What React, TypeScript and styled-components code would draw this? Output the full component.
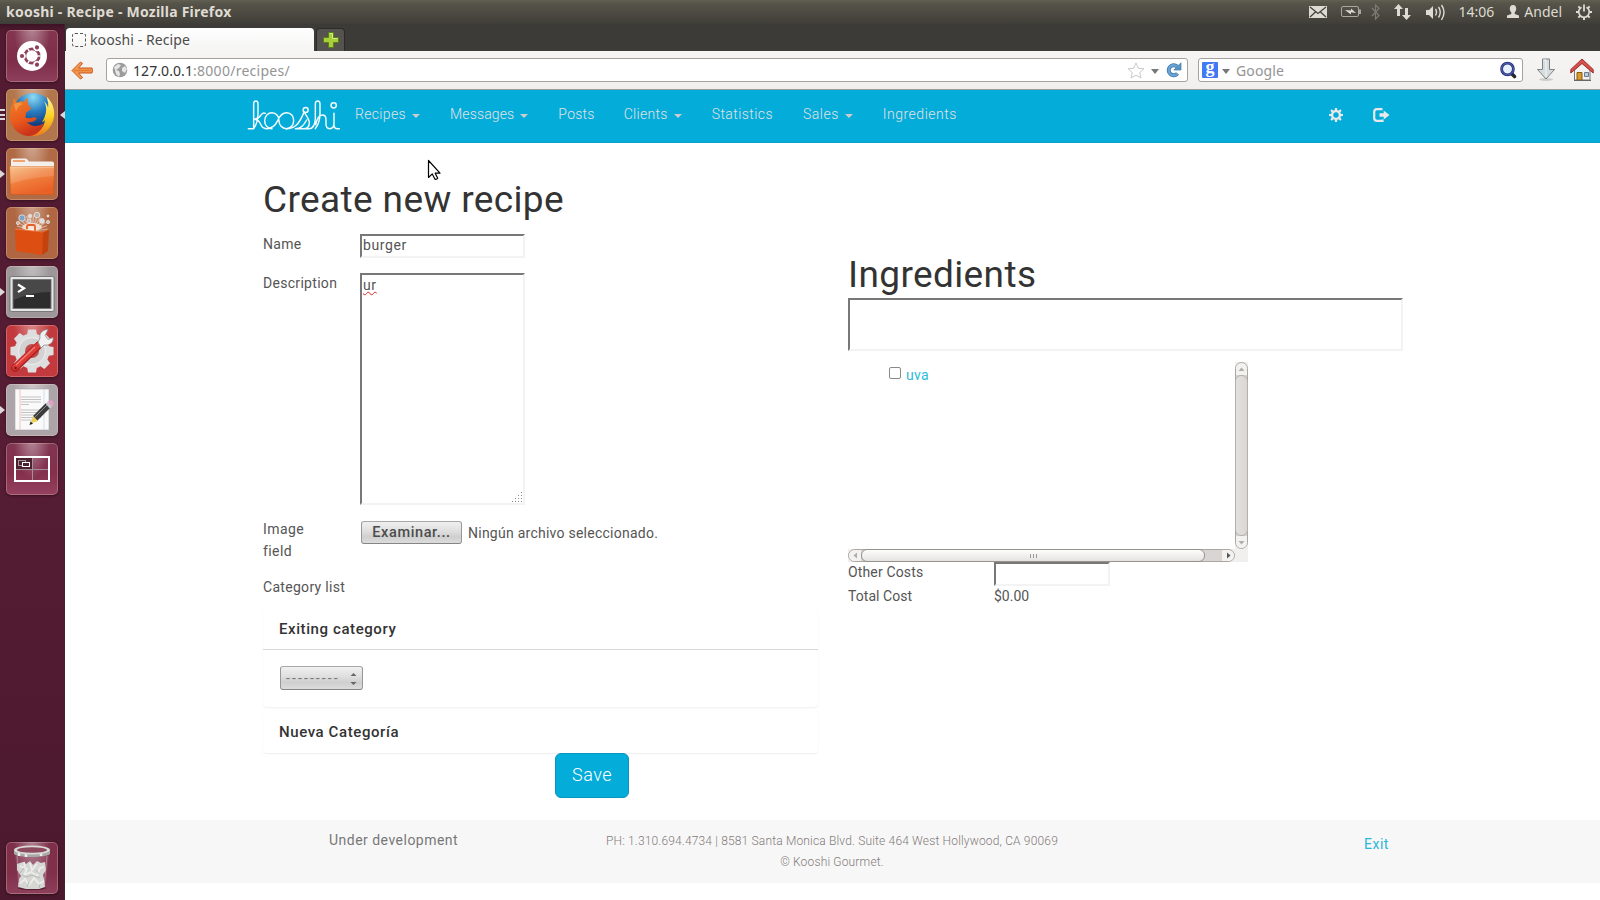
import React from "react";
import styled, { createGlobalStyle } from "styled-components";

const SYSTEM = '"Noto Sans", "Open Sans", sans-serif';
const SITE = 'Roboto, "Liberation Sans", sans-serif';

const Global = createGlobalStyle`
  * { box-sizing: border-box; }
  body { margin: 0; overflow: hidden; background: #fff; }
  svg { display: block; flex: none; }
`;

/* ---------- desktop shell ---------- */

const Desktop = styled.div`
  position: relative;
  display: flex;
  flex-direction: column;
  width: 1600px;
  height: 900px;
  overflow: hidden;
  font-family: ${SYSTEM};
`;

const TopPanel = styled.header`
  display: flex;
  align-items: center;
  height: 24px;
  padding: 0 8px 0 6px;
  background: linear-gradient(#625f53 0, #57544a 3px, #413f39 23px, #3d3c37);
  color: #dfdbd2;
  font-size: 14px;
  line-height: 24px;
`;

const WindowTitle = styled.span`
  flex: 1;
  font-weight: 700;
  letter-spacing: 0.24px;
`;

const PanelText = styled.span<{ $gap: number }>`
  margin-left: ${(p) => p.$gap}px;
`;

const Tray = styled.div`
  display: flex;
  align-items: center;
  height: 24px;
`;

const Workspace = styled.div`
  display: flex;
  flex: 1;
  min-height: 0;
`;

const Launcher = styled.nav`
  display: flex;
  flex-direction: column;
  gap: 7px;
  width: 65px;
  padding: 6px 7px 6px 6px;
  background: linear-gradient(#3c1324 0, #521b31 7px, #561d34 50%, #4b192d);
  border-right: 1px solid #42202e;
`;

const Tile = styled.div<{ $bg: string; $last?: boolean }>`
  position: relative;
  width: 52px;
  height: 52px;
  flex: none;
  margin-top: ${(p) => (p.$last ? "auto" : "0")};
  border-radius: 5px;
  background: radial-gradient(ellipse at 50% -8%, rgba(255, 255, 255, 0.42), transparent 50%), ${(p) => p.$bg};
  box-shadow: inset 0 0 0 1px rgba(255, 220, 200, 0.28), 0 1px 3px rgba(0, 0, 0, 0.4);
`;

const Running = styled.i<{ $right?: boolean }>`
  position: absolute;
  top: 22px;
  ${(p) => (p.$right ? "right: -7px" : "left: -6px")};
  border: 4px solid transparent;
  border-${(p) => (p.$right ? "right" : "left")}: 5px solid #dcd8da;
  border-${(p) => (p.$right ? "left" : "right")}: 0;
`;

const WindowPips = styled.i`
  position: absolute;
  top: 20px;
  left: -6px;
  width: 5px;
  height: 11px;
  background: repeating-linear-gradient(#dcd8da 0 2px, transparent 2px 4.5px);
`;

/* ---------- browser chrome ---------- */

const Browser = styled.div`
  display: flex;
  flex-direction: column;
  flex: 1;
  min-width: 0;
  background: #fff;
`;

const TabStrip = styled.div`
  display: flex;
  align-items: flex-end;
  gap: 2px;
  height: 27px;
  padding-left: 1px;
  background: #3c3b37;
`;

const Tab = styled.div`
  display: flex;
  align-items: center;
  gap: 4px;
  width: 248px;
  height: 23px;
  padding: 1px 6px 0;
  border-radius: 4px 4px 0 0;
  background: linear-gradient(#fff, #f5f4f3);
  color: #4c4c4c;
  font-size: 14px;
  line-height: 22px;
  letter-spacing: 0.09px;
`;

const Favicon = styled.span`
  width: 14px;
  height: 14px;
  border: 1px dashed #555;
  border-radius: 3px;
`;

const NewTab = styled.div`
  display: flex;
  align-items: center;
  justify-content: center;
  width: 29px;
  height: 23px;
  border: 1px solid #2c2b28;
  border-bottom: 0;
  border-radius: 4px 4px 0 0;
  background: #54534f;
`;

const Toolbar = styled.div`
  display: flex;
  align-items: center;
  height: 39px;
  padding: 0 6px 0;
  border-bottom: 1px solid #9c9a97;
  background: linear-gradient(#f6f5f4, #f0efed);
`;

const Field = styled.div<{ $w: number; $left: number }>`
  display: flex;
  align-items: center;
  width: ${(p) => p.$w}px;
  height: 24px;
  margin-left: ${(p) => p.$left}px;
  padding: 0 5px;
  border: 1px solid #a5a29e;
  border-radius: 3px;
  background: #fff;
  color: #949494;
  font-size: 14px;
  line-height: 22px;
`;

const Address = styled.span`
  flex: 1;
  margin-left: 5px;
  padding-top: 1px;
  letter-spacing: 0.27px;
  b {
    font-weight: 400;
    letter-spacing: 0.08px;
    color: #333;
  }
`;

const SearchHint = styled.span`
  flex: 1;
  margin-left: 6px;
  padding-top: 1px;
  letter-spacing: 0.13px;
`;

const Drop = styled.i<{ $left: number; $right: number }>`
  margin: 3px ${(p) => p.$right}px 0 ${(p) => p.$left}px;
  border: 4px solid transparent;
  border-top: 5px solid #777;
  border-bottom: 0;
`;

const GoogleMark = styled.span`
  width: 16px;
  height: 16px;
  margin-left: -2px;
  border-radius: 1px;
  background: #4279f4;
  color: #fff;
  font: 700 18px/10px "Liberation Serif", serif;
  text-align: center;
`;

const ToolGroup = styled.div`
  display: flex;
  align-items: center;
  gap: 14px;
  margin-left: 13px;
`;

/* ---------- site ---------- */

const SiteNav = styled.nav`
  display: flex;
  align-items: flex-start;
  height: 53px;
  padding-left: 175px;
  border-bottom: 1px solid #0b9fcb;
  background: #04acda;
  font: 300 14px/20px ${SITE};
  color: #e2e2e2;
`;

const LogoLink = styled.a`
  width: 110px;
  height: 46px;
  margin-top: 2px;
  flex: none;
`;

const NavItem = styled.a<{ $left: number; $ls: number }>`
  display: flex;
  align-items: center;
  margin: 14px 0 0 ${(p) => p.$left}px;
  letter-spacing: ${(p) => p.$ls}px;
`;

const Caret = styled.i`
  margin: 3px 0 0 6px;
  border: 4px solid transparent;
  border-top-color: #ccc;
  border-bottom: 0;
`;

const NavIcon = styled.span<{ $left: number }>`
  margin: 18px 0 0 ${(p) => p.$left}px;
`;

const Main = styled.main`
  display: flex;
  gap: 30px;
  height: 677px;
  padding: 37px 0 0 198px;
  color: #555;
  font: 400 14px/20px ${SITE};
  letter-spacing: 0.3px;
`;

const Column = styled.section<{ $top?: number }>`
  display: flex;
  flex-direction: column;
  width: 555px;
  padding-top: ${(p) => p.$top ?? 0}px;
`;

const Heading = styled.h1<{ $bottom: number }>`
  margin: 0 0 ${(p) => p.$bottom}px;
  color: #333;
  font-size: 37px;
  font-weight: 400;
  line-height: 40px;
  letter-spacing: 0.38px;
`;

const FormRow = styled.div<{ $h: number; $gap: number }>`
  display: flex;
  align-items: flex-start;
  height: ${(p) => p.$h}px;
  margin-bottom: ${(p) => p.$gap}px;
`;

const Label = styled.label<{ $w: number }>`
  width: ${(p) => p.$w}px;
`;

const Inset = styled.div<{ $w: number; $h: number }>`
  position: relative;
  width: ${(p) => p.$w}px;
  height: ${(p) => p.$h}px;
  flex: none;
  padding-left: 1px;
  border: 2px solid;
  border-color: #787878 #f3f3f3 #f3f3f3 #787878;
  background: #fff;
  line-height: 18px;
  letter-spacing: 0.6px;
`;

const Misspelled = styled.span`
  display: inline-block;
  margin-top: 1px;
  text-decoration: underline wavy #e02020 1px;
  text-underline-offset: 1px;
  text-decoration-skip-ink: none;
`;

const Grip = styled.span`
  position: absolute;
  right: 0;
  bottom: 0;
`;

const ImageLabel = styled.label`
  width: 50px;
  margin-right: 48px;
  line-height: 21.5px;
  letter-spacing: 0.4px;
`;

const gtkButton = `
  border: 1px solid #979797;
  border-color: #a8a8a8 #979797 #858585;
  border-radius: 3px;
  background: linear-gradient(#f0f0f0, #dedede 45%, #cfcfcf 70%, #dcdcdc);
`;

const BrowseButton = styled.button`
  ${gtkButton}
  width: 101px;
  height: 23px;
  margin-top: 2px;
  padding: 0;
  color: #4c4c4c;
  font: 500 14.5px/20px ${SITE};
  letter-spacing: 0.6px;
`;

const FileName = styled.span`
  margin: 4px 0 0 6px;
  line-height: 20px;
  letter-spacing: 0.25px;
`;

const Panel = styled.div`
  margin-bottom: 5px;
  border-radius: 4px;
  box-shadow: 0 1px 2px rgba(0, 0, 0, 0.07);
`;

const PanelHead = styled.div<{ $line?: boolean }>`
  height: 41px;
  padding-left: 16px;
  border-bottom: 1px solid ${(p) => (p.$line ? "#d8d8d8" : "transparent")};
  color: #333;
  font-size: 15px;
  font-weight: 500;
  line-height: 40px;
  letter-spacing: 0.59px;
`;

const PanelBody = styled.div`
  height: 57px;
  padding: 16px 17px 0;
`;

const Select = styled.div`
  ${gtkButton}
  display: flex;
  align-items: center;
  justify-content: space-between;
  width: 83px;
  height: 24px;
  padding: 0 5px;
  color: #777;
  letter-spacing: 2.1px;
`;

const SaveButton = styled.button`
  width: 74px;
  height: 45px;
  margin: -5px 0 0 292px;
  padding: 0 0 2px;
  border: 1px solid #0895c0;
  border-radius: 6px;
  background: #04acda;
  color: #fff;
  font: 300 18px/24px ${SITE};
  letter-spacing: 0.5px;
`;

const ScrollArea = styled.div`
  display: grid;
  grid-template: 187px 13px / 387px 13px;
  width: 400px;
  margin-top: 11px;
  background: #f1f0ef;
`;

const Ingredient = styled.div`
  display: flex;
  align-items: flex-start;
  padding: 5px 0 0 41px;
  background: #fff;
  color: #2bbbdc;
`;

const Check = styled.span`
  width: 12px;
  height: 12px;
  margin-right: 5px;
  border: 1px solid #8d8983;
  border-radius: 2px;
  background: #fff;
`;

const IngredientName = styled.span`
  line-height: 16px;
`;

const Track = styled.div<{ $dir: "row" | "column" }>`
  display: flex;
  flex-direction: ${(p) => p.$dir};
  border: 1px solid #aaa7a3;
  border-radius: 7px;
  background: #d8d5d2;
`;

const Stepper = styled.div<{ $dir: "row" | "column"; $end?: boolean }>`
  display: flex;
  align-items: center;
  justify-content: center;
  ${(p) => (p.$dir === "row" ? "width: 12px" : "height: 12px")};
  flex: none;
  border-radius: ${(p) =>
    p.$dir === "row" ? (p.$end ? "0 6px 6px 0" : "6px 0 0 6px") : p.$end ? "0 0 6px 6px" : "6px 6px 0 0"};
  background: #f3f2f1;
`;

const ThumbVertical = styled.div`
  flex: 1;
  margin: 0 -1px;
  border: 1px solid #b4b1ad;
  border-radius: 6px;
  background: linear-gradient(90deg, #e3e1df, #dad7d4);
`;

const ThumbHorizontal = styled.div`
  display: flex;
  align-items: center;
  justify-content: center;
  gap: 2px;
  width: 344px;
  margin: -1px 17px -1px 0;
  border: 1px solid #96938f;
  border-radius: 6px;
  background: linear-gradient(#fdfdfd, #f1f0ef 50%, #e3e2e0);
  i {
    width: 1px;
    height: 4px;
    background: #9c9a97;
  }
`;

const CostLabel = styled.span<{ $ls: number }>`
  width: 146px;
  letter-spacing: ${(p) => p.$ls}px;
`;

const Amount = styled.span`
  letter-spacing: 0;
`;

const Footer = styled.footer`
  display: flex;
  height: 63px;
  padding: 10px 0 0 264px;
  background: #f7f7f7;
  color: #777;
  font: 400 14px/20px ${SITE};
`;

const Status = styled.span`
  width: 277px;
  letter-spacing: 0.48px;
`;

const Contact = styled.div`
  width: 452px;
  padding-top: 1px;
  color: #837b79;
  font-size: 12px;
  font-weight: 300;
  line-height: 21px;
  letter-spacing: 0.165px;
  text-align: center;
  white-space: nowrap;
`;

const Exit = styled.a`
  margin: 4px 0 0 306px;
  color: #2bb8da;
  letter-spacing: 0.5px;
`;

const Pointer = styled.div`
  position: absolute;
  left: 427px;
  top: 159px;
`;

/* ---------- drawings ---------- */

const rays = (n: number) => Array.from({ length: n }, (_, i) => (i * 360) / n);

const UbuntuIcon = () => (
  <svg width="52" height="52" viewBox="0 0 52 52">
    <circle cx="26" cy="26" r="15" fill="#fff" />
    <circle cx="26" cy="26" r="7.2" fill="none" stroke="#903f5c" strokeWidth="2.8" />
    {[60, 180, 300].map((a) => (
      <g key={a} transform={`rotate(${a} 26 26)`}>
        <circle cx="35.6" cy="26" r="3.4" fill="#fff" />
        <circle cx="36" cy="26" r="2.1" fill="#903f5c" />
      </g>
    ))}
    {[0, 120, 240].map((a) => (
      <path key={a} d="M31 26h5" stroke="#fff" strokeWidth="1.3" transform={`rotate(${a} 26 26)`} />
    ))}
  </svg>
);

const FirefoxIcon = () => (
  <svg width="52" height="52" viewBox="0 0 52 52">
    <defs>
      <radialGradient id="globe" cx=".5" cy=".1" r=".8">
        <stop offset="0" stopColor="#8fdcf5" />
        <stop offset=".45" stopColor="#2a7fc2" />
        <stop offset="1" stopColor="#0b2a6b" />
      </radialGradient>
      <linearGradient id="fox" x1="0" y1="0" x2=".4" y2="1">
        <stop offset="0" stopColor="#f0832a" />
        <stop offset=".6" stopColor="#ea5a1d" />
        <stop offset="1" stopColor="#c9341a" />
      </linearGradient>
      <linearGradient id="tail" x1="0" y1="0" x2="0" y2="1">
        <stop offset="0" stopColor="#fff2a0" />
        <stop offset=".5" stopColor="#fbd123" />
        <stop offset="1" stopColor="#ee7a1d" />
      </linearGradient>
    </defs>
    <circle cx="27" cy="24" r="20" fill="url(#globe)" />
    <path d="M41 8c6 6 8 13 7 20-2 12-11 19-21 19-5 0-7-2-7-2 10 1 18-5 19-14-1 1-2 2-3 2 4-6 6-14 2-21 2 2 4 5 4 7 1-5-1-8-1-11z" fill="url(#tail)" />
    <path d="M8 9c1 1 2 3 3 5 3-2 5-2 7-1 1-2 2-3 4-4-1 3 0 6 1 8 1 1 2 1 2 2-1 3-4 3-5 5 0 2 0 3-1 4 3 3 8-1 12 1-2 4-6 5-10 4 4 5 11 5 17 1-3 8-8 13-15 13C13 47 4 38 4 27c0-6 1-9 3-12 0-2 0-4 1-6z" fill="url(#fox)" />
    <path d="M8 15q5-3 9 0-5 1-7 8z" fill="#f7a24c" opacity=".7" />
  </svg>
);

const FilesIcon = () => (
  <svg width="52" height="52" viewBox="0 0 52 52">
    <defs>
      <linearGradient id="folder" x1="0" y1="0" x2=".5" y2="1">
        <stop offset="0" stopColor="#f6bb7a" />
        <stop offset=".5" stopColor="#f0803f" />
        <stop offset="1" stopColor="#ea6125" />
      </linearGradient>
    </defs>
    <path d="M5 17V12q0-1.500 1.500-1.500H19q1.500 0 2.500 1.200l1.500 1.800h23q2 0 2 2V19H5z" fill="#f4efeb" />
    <path d="M7 13h12" stroke="#f19250" strokeWidth="1.600" />
    <path d="M3.500 18.500h45L47.500 45q0 1.500-1.500 1.500H6q-1.500 0-1.500-1.500z" fill="url(#folder)" stroke="#cf5a22" strokeWidth=".7" />
    <path d="M4 19h44v9Q25 29 4.500 36z" fill="#fff" opacity=".14" />
    <path d="M4 19h44" stroke="#fbd0a8" />
  </svg>
);

const SoftwareIcon = () => (
  <svg width="52" height="52" viewBox="0 0 52 52">
    {rays(14).map((a) => (
      <path key={a} d="M26 24L26 8" stroke="#ffe6d4" strokeWidth="1.200" opacity=".5" transform={`rotate(${a / 2 - 84} 26 24)`} />
    ))}
    <ellipse cx="26" cy="20" rx="10" ry="4" fill="#fff6ec" opacity=".7" />
    {[[16, 11, 3.2, "#7da4c8"], [24, 9, 1.8, "#ddd"], [31, 8, 2.8, "#b9b4ae"], [36, 14, 2.4, "#ddd"], [12, 16, 1.6, "#c8b4a4"], [42, 9, 1, "#eee"], [42, 15, 1.6, "#b9c4cc"], [23, 14, 2, "#c0bab2"]].map(([x, y, r, f], i) => (
      <circle key={i} cx={x} cy={y} r={r} fill={f as string} stroke="#eee6df" strokeWidth=".8" />
    ))}
    <path d="M21 22v-2.500q0-1.500 1.500-1.500h5q1.500 0 1.500 1.500V24" fill="none" stroke="#e4602a" strokeWidth="1.800" />
    <path d="M9 22l28 3-1 23L10 44z" fill="#dc4e12" />
    <path d="M37 25l6-3-1 22-6 4z" fill="#c4430c" />
    <path d="M9 22l28 3 6-3" fill="none" stroke="#ee7c45" strokeWidth=".8" />
  </svg>
);

const TerminalIcon = () => (
  <svg width="52" height="52" viewBox="0 0 52 52">
    <rect x="4" y="10.500" width="44" height="35" rx="1.500" fill="#e6e6e6" stroke="#666" strokeWidth=".8" />
    <rect x="7" y="13.500" width="38" height="29" fill="#2d2d2d" stroke="#777" />
    <path d="M8 14h36v12Q26 26 8 34z" fill="#fff" opacity=".13" />
    <path d="M12 18.500l6 3.800-6 3.800" fill="none" stroke="#fff" strokeWidth="2.300" />
    <path d="M20 30h8" stroke="#fff" strokeWidth="2" />
  </svg>
);

const SettingsIcon = () => (
  <svg width="52" height="52" viewBox="0 0 52 52">
    {rays(8).map((a) => (
      <path key={a} d="M20.500 13l1.500-8.500h8l1.500 8.500z" fill="#dedede" transform={`rotate(${a} 26 26)`} />
    ))}
    <circle cx="26" cy="26" r="17.500" fill="#dedede" />
    <circle cx="26" cy="26" r="13.500" fill="#d2d2d2" stroke="#efefef" />
    <circle cx="26" cy="26" r="7" fill="#c14a4a" />
    <path d="M9 43L33 20" stroke="#a81f1d" strokeWidth="7.500" strokeLinecap="round" />
    <path d="M9 42.500L32 20.500" stroke="#dd3a36" strokeWidth="5.500" strokeLinecap="round" />
    <path d="M10 40l19-18" stroke="#f0817c" strokeWidth="1.200" />
    <path d="M32 17l2-4c-1-5 3-8.500 8-8.500l-3 6 3 4 5-2c1 5-4 8.500-9 7.500l-3 3z" fill="#f1f1f1" stroke="#8e8e8e" strokeWidth=".8" />
    <circle cx="9.500" cy="43" r="1.300" fill="#7c1512" />
  </svg>
);

const EditorIcon = () => (
  <svg width="52" height="52" viewBox="0 0 52 52">
    <path d="M9 5h34v41H9z" fill="#fafafa" stroke="#aaa" strokeWidth=".6" />
    <path d="M14 5v41" stroke="#f3b5b5" strokeWidth=".8" />
    <path d="M38 5v41" stroke="#b8cdee" strokeWidth=".6" />
    {[13, 15.5, 18, 20.5, 26, 28.5, 31, 33.5, 36].map((y, i) => (
      <path key={y} d={`M15 ${y}h${i === 3 ? 8 : i === 8 ? 12 : 20}`} stroke="#b4b4b4" strokeWidth=".8" />
    ))}
    <path d="M27 32L40 19l4 5-13 13z" fill="#3d3d3d" />
    <path d="M28.500 33.500L41.500 20.500" stroke="#888" />
    <path d="M24.500 39.500L27 32l5 5z" fill="#ecd05a" />
    <path d="M23.500 41l1-3.500 2.500 2.200z" fill="#222" />
    <path d="M39.500 19.500l2.500-2 4.200 5-2.500 2z" fill="#c9c9c9" />
    <path d="M42 17.500q3-2.500 5 0t-.8 5z" fill="#e79dc5" />
  </svg>
);

const SwitcherIcon = () => (
  <svg width="52" height="52" viewBox="0 0 52 52">
    <rect x="9" y="14" width="34" height="24" fill="none" stroke="#fff" strokeWidth="2" />
    <rect x="10" y="15" width="16" height="11" fill="#4d2030" />
    <path d="M26.500 15v22M10 26.500h32" stroke="#a1919a" />
    <rect x="12.500" y="17.500" width="7" height="5" fill="none" stroke="#999" />
    <rect x="16.500" y="19.500" width="7" height="4" fill="#4d2030" stroke="#fff" />
  </svg>
);

const TrashIcon = () => (
  <svg width="52" height="52" viewBox="0 0 52 52">
    <ellipse cx="26" cy="46" rx="14" ry="2" fill="#35101f" opacity=".6" />
    <path d="M9 12h34l-3.500 33q-13.500 4-27 0z" fill="#fff" opacity=".1" />
    <path d="M11 22l6-2 3 2 4-3 3 4 4-4 4 2 4-1 1 8-3 5 1 4 1 8-6 2h-13l-8-2 1-8 2-3-4-6z" fill="#d6d7d4" />
    <path d="M14 24l7 3-3 6 7-3 6 4 3-8 4-1M13 42l6-5 4 6 5-7 5 6 5-3M24 21l2 7 5-6M18 20l1 5" fill="none" stroke="#eceeea" strokeWidth="1.700" />
    <path d="M16 33l5 2 5-2 8 3M14 31l4-5M30 28l3 4M21 45l2-5M33 46l1-4" stroke="#b5b7b4" fill="none" />
    <path d="M8 8v4c4 4 32 4 36 0V8z" fill="#a9aaa8" />
    <path d="M13 9v5M20 10v5M35 10v4" stroke="#eee" strokeWidth="2.500" />
    <ellipse cx="26" cy="8" rx="18" ry="4.500" fill="#d9d9d7" />
    <ellipse cx="26" cy="8" rx="15" ry="2.800" fill="#8c4a5e" />
    <path d="M11 14l3 31M41 14l-3 31" stroke="#d9c3ca" opacity=".6" strokeWidth=".8" />
  </svg>
);

const TrayIcons = () => (
  <svg width="140" height="24" viewBox="1306 0 140 24" fill="none" stroke="#dfdbd2">
    <path d="M1309 6h18v12h-18z" fill="#dfdbd2" stroke="none" />
    <path d="M1310 7l8 6.500 8-6.500M1310 17l5.500-5M1326 17l-5.500-5" stroke="#45433d" strokeWidth="1.300" />
    <rect x="1341.500" y="6.500" width="17" height="10" rx="1.500" stroke="#aaa79f" />
    <path d="M1360 9.500v4.500" stroke="#aaa79f" strokeWidth="2" />
    <path d="M1345 10l6 .5 0-2 5 4.500-5-.8 0 2.300z" fill="#dfdbd2" stroke="none" />
    <path d="M1372 8l7 7.500-3.500 3.500V5l3.500 3.500L1372 16" stroke="#7c7a73" strokeWidth="1.200" />
    <path d="M1394 9l4.500-5 4.500 5h-3v7h-3V9zM1402 15l4.500 5 4.500-5h-3V8h-3v7z" fill="#dfdbd2" stroke="none" />
    <path d="M1426 10h3l4-4v13l-4-4h-3z" fill="#dfdbd2" stroke="none" />
    <path d="M1435.500 9q2 3 0 6.500M1438.500 7q3.500 5 0 10.500M1441.500 5q5 7 0 15" strokeWidth="1.400" />
  </svg>
);

const UserIcon = () => (
  <svg width="14" height="24" viewBox="0 0 14 24" fill="#dfdbd2">
    <path d="M7 5c2.500 0 3.300 1.700 3.200 4-.1 1.700-.9 2.700-1.500 3.500v1.500l4.300 1.500V18H1v-2.500L5.300 14v-1.500C4.700 11.700 3.900 10.700 3.800 9 3.700 6.700 4.500 5 7 5z" />
  </svg>
);

const PowerIcon = () => (
  <svg width="16" height="24" viewBox="0 0 16 24" fill="none" stroke="#dfdbd2">
    <path d="M5.500 7.300a5.300 5.300 0 1 0 5 0" strokeWidth="1.700" />
    <path d="M8 4.500v7" strokeWidth="1.800" />
    {[45, 90, 135, 180, 225, 270, 315].map((a) => (
      <path key={a} d="M8 6.500V4" strokeWidth="2" transform={`rotate(${a} 8 12)`} />
    ))}
  </svg>
);

const PlusIcon = () => (
  <svg width="16" height="16" viewBox="0 0 16 16">
    <path d="M5.500.5h5v5h5v5h-5v5h-5v-5h-5v-5h5z" fill="#a6cf38" stroke="#5b7d1a" />
    <path d="M6.500 1.500h3v5h5" fill="none" stroke="#d6ec87" />
  </svg>
);

const BackIcon = () => (
  <svg width="22" height="19" viewBox="0 0 22 19">
    <path d="M9.500 1L1 9.500 9.500 18l2-1.500-4-4.500H21q1-2.500 0-5H7.500l4-4.500z" fill="#f39a50" stroke="#c9541c" strokeLinejoin="round" />
    <path d="M3 9.500h17" stroke="#e77a2e" strokeWidth="1.500" />
  </svg>
);

const GlobeIcon = () => (
  <svg width="16" height="16" viewBox="0 0 16 16">
    <circle cx="8" cy="8" r="7.300" fill="#9b9b9b" />
    <path d="M2 5l4-3 3 1-2 3-3 2 3 1 1 3-1 3-3-3-1-4zM10 6l3-2 2 3-2 4-3-2z" fill="#e6e6e6" />
  </svg>
);

const StarIcon = () => (
  <svg width="18" height="17" viewBox="0 0 18 17">
    <path d="M9 1l2.300 5.200 5.700.6-4.300 3.800 1.300 5.400-5-2.900L4 16l1.300-5.400L1 6.800l5.700-.6z" fill="#fff" stroke="#c9c9c9" strokeLinejoin="round" />
  </svg>
);

const ReloadIcon = () => (
  <svg width="17" height="17" viewBox="0 0 17 17">
    <path d="M12.500 11.500A5 5 0 1 1 12 4.500" fill="none" stroke="#3d78ad" strokeWidth="4" />
    <path d="M12.500 11.500A5 5 0 1 1 12 4.500" fill="none" stroke="#6aa3d3" strokeWidth="2.400" />
    <path d="M16 .8V8H8.800z" fill="#5a95c8" stroke="#3d78ad" strokeWidth=".7" />
  </svg>
);

const SearchIcon = () => (
  <svg width="18" height="18" viewBox="0 0 18 18">
    <path d="M12 12l3.500 3.500" stroke="#2b2b2b" strokeWidth="3.600" strokeLinecap="round" />
    <circle cx="8.500" cy="8" r="5.900" fill="#e8effc" stroke="#27317d" strokeWidth="2.800" />
    <circle cx="8.500" cy="8" r="5.900" fill="none" stroke="#5567b5" strokeWidth="1" />
  </svg>
);

const DownloadIcon = () => (
  <svg width="20" height="24" viewBox="0 0 20 24">
    <ellipse cx="10" cy="21.500" rx="7" ry="1.500" fill="#ccc" />
    <path d="M6.500 1h7v10.500h5L10 21 1.500 11.500h5z" fill="#d7dcde" stroke="#7d8284" strokeLinejoin="round" />
    <path d="M7.500 2h2.500v17" fill="none" stroke="#f5f7f7" />
  </svg>
);

const HomeIcon = () => (
  <svg width="24" height="24" viewBox="0 0 24 24">
    <path d="M4.500 12L12 5l8 7v10h-15.500z" fill="#f3f3f1" stroke="#777" />
    <path d="M7 14.500h5V22H7z" fill="#d99a2b" stroke="#8a5a10" />
    <path d="M14.500 14.500h4v4h-4z" fill="#b9d0e4" stroke="#68788a" />
    <path d="M12 1L.8 11.500V15L12 5.500 23.200 15v-3.500z" fill="#d65050" stroke="#a12a2a" strokeLinejoin="round" />
    <path d="M4 22.500h17" stroke="#666" />
  </svg>
);

const KooshiLogo = () => (
  <svg width="110" height="46" viewBox="0 0 330 138" fill="none" stroke="#f4fbfd" strokeWidth="4.400" strokeLinecap="round" strokeLinejoin="round">
    <path d="M25 110h16V36q0-9 6.500-9t6.500 9v28q0 28-13 46" />
    <path d="M76 64q-6-4-12 4-8 12-20 14 12 1 18 15 5 13 17 13c18 0 27-9 34-24 6-15 14-24 27-24 13 0 21 11 21 24s-9 24-22 24-22-11-22-24-9-24-21-24-22 10-22 24 10 24 22 24" />
    <path d="M139 110c24 0 36-12 49-40l4-10" />
    <circle cx="197" cy="54" r="7.500" />
    <path d="M193 62c8 12 15 20 15 30 0 12-8 18-18 18h-24c16 0 24-8 34-26M190 110h18q16 0 18-30V36q0-9 7-9t7 9v28q0 28-14 46M227 98c4-18 10-29 20-29 9 0 11 7 11 14v14q0 13 11 13 13 0 13-17V64v34q0 12 10 12h6" />
    <circle cx="281" cy="40" r="8" strokeWidth="4.600" />
  </svg>
);

const CogIcon = () => (
  <svg width="14" height="14" viewBox="0 0 14 14">
    {rays(8).map((a) => (
      <path key={a} d="M5.700 3L6 0h2l.3 3z" fill="#e9e9e9" transform={`rotate(${a} 7 7)`} />
    ))}
    <circle cx="7" cy="7" r="3.900" fill="none" stroke="#e9e9e9" strokeWidth="2.400" />
  </svg>
);

const LogoutIcon = () => (
  <svg width="17" height="14" viewBox="0 0 17 14">
    <path d="M9.500 1.200H4Q1.200 1.200 1.200 4v6q0 2.800 2.800 2.800h5.500v-1.300" fill="none" stroke="#e9e9e9" strokeWidth="2.200" />
    <path d="M6.500 5.300h4.200V2.500L16.500 7l-5.800 4.500V8.700H6.500z" fill="#e9e9e9" />
  </svg>
);

const Arrow = ({ turn, color = "#b0aeab" }: { turn: number; color?: string }) => (
  <svg width="7" height="7" viewBox="0 0 7 7">
    <path d="M.5 5l3-3.500 3 3.500z" fill={color} transform={`rotate(${turn} 3.500 3.500)`} />
  </svg>
);

const GripDots = () => (
  <svg width="11" height="11" viewBox="0 0 11 11" fill="#888">
    {[[9, 0], [9, 3], [9, 6], [9, 9], [6, 3], [6, 6], [6, 9], [3, 6], [3, 9], [0, 9]].map(([x, y]) => (
      <rect key={`${x}-${y}`} x={x} y={y} width="1" height="1" />
    ))}
  </svg>
);

const SelectArrows = () => (
  <svg width="7" height="14" viewBox="0 0 7 14" fill="#666">
    <path d="M.5 5l3-3 3 3zM.5 11l3 3 3-3z" />
  </svg>
);

const PointerIcon = () => (
  <svg width="15" height="22" viewBox="0 0 15 22">
    <path d="M1.500 1.500v17l3.800-3.600 2.700 5.300q1.500.6 2.700-1l-2.500-5h4.800z" fill="#fff" stroke="#000" strokeWidth="1.200" strokeLinejoin="round" />
  </svg>
);

/* ---------- page ---------- */

const launcherItems = [
  { icon: <FirefoxIcon />, bg: "#b2764c", mark: "active" },
  { icon: <FilesIcon />, bg: "#b06a44", mark: "open" },
  { icon: <SoftwareIcon />, bg: "#af6642", mark: "" },
  { icon: <TerminalIcon />, bg: "#9d979a", mark: "open" },
  { icon: <SettingsIcon />, bg: "#c23a3e", mark: "" },
  { icon: <EditorIcon />, bg: "#aca4a8", mark: "open" },
  { icon: <SwitcherIcon />, bg: "linear-gradient(#7f3550, #85304d 60%, #944260)", mark: "" },
];

const navItems = [
  { text: "Recipes", menu: true, left: 5, ls: 0.34 },
  { text: "Messages", menu: true, left: 30, ls: 0.15 },
  { text: "Posts", menu: false, left: 30, ls: 0.25 },
  { text: "Clients", menu: true, left: 29, ls: 0.3 },
  { text: "Statistics", menu: false, left: 30, ls: 0.43 },
  { text: "Sales", menu: true, left: 30, ls: 0.5 },
  { text: "Ingredients", menu: false, left: 30, ls: 0.5 },
];

export default function App() {
  return (
    <Desktop>
      <Global />
      <TopPanel>
        <WindowTitle>kooshi - Recipe - Mozilla Firefox</WindowTitle>
        <Tray>
          <TrayIcons />
          <PanelText $gap={12}>14:06</PanelText>
          <PanelText $gap={12}><UserIcon /></PanelText>
          <PanelText $gap={4}>Andel</PanelText>
          <PanelText $gap={14}><PowerIcon /></PanelText>
        </Tray>
      </TopPanel>
      <Workspace>
        <Launcher>
          <Tile $bg="linear-gradient(#843651, #7d2f4a 60%, #8e3f5c)"><UbuntuIcon /></Tile>
          {launcherItems.map((item, i) => (
            <Tile key={i} $bg={item.bg}>
              {item.icon}
              {item.mark === "open" && <Running />}
              {item.mark === "active" && <><WindowPips /><Running $right /></>}
            </Tile>
          ))}
          <Tile $bg="linear-gradient(#7d2f4a, #80304b 60%, #8e3f5c)" $last><TrashIcon /></Tile>
        </Launcher>
        <Browser>
          <TabStrip>
            <Tab><Favicon />kooshi - Recipe</Tab>
            <NewTab><PlusIcon /></NewTab>
          </TabStrip>
          <Toolbar>
            <BackIcon />
            <Field $w={1082} $left={13}>
              <GlobeIcon />
              <Address><b>127.0.0.1</b>:8000/recipes/</Address>
              <StarIcon />
              <Drop $left={6} $right={6} />
              <ReloadIcon />
            </Field>
            <Field $w={325} $left={10}>
              <GoogleMark>g</GoogleMark>
              <Drop $left={4} $right={0} />
              <SearchHint>Google</SearchHint>
              <SearchIcon />
            </Field>
            <ToolGroup>
              <DownloadIcon />
              <HomeIcon />
            </ToolGroup>
          </Toolbar>
          <SiteNav>
            <LogoLink><KooshiLogo /></LogoLink>
            {navItems.map((n) => (
              <NavItem key={n.text} $left={n.left} $ls={n.ls}>
                {n.text}
                {n.menu && <Caret />}
              </NavItem>
            ))}
            <NavIcon $left={372}><CogIcon /></NavIcon>
            <NavIcon $left={30}><LogoutIcon /></NavIcon>
          </SiteNav>
          <Main>
            <Column>
              <Heading $bottom={14}>Create new recipe</Heading>
              <FormRow $h={24} $gap={15}>
                <Label $w={97}>Name</Label>
                <Inset $w={165} $h={24}>burger</Inset>
              </FormRow>
              <FormRow $h={232} $gap={14}>
                <Label $w={97}>Description</Label>
                <Inset $w={165} $h={232}>
                  <Misspelled>ur</Misspelled>
                  <Grip><GripDots /></Grip>
                </Inset>
              </FormRow>
              <FormRow $h={43} $gap={15}>
                <ImageLabel>Image field</ImageLabel>
                <BrowseButton>Examinar...</BrowseButton>
                <FileName>Ningún archivo seleccionado.</FileName>
              </FormRow>
              <FormRow $h={20} $gap={12}>
                <Label $w={200}>Category list</Label>
              </FormRow>
              <Panel>
                <PanelHead $line>Exiting category</PanelHead>
                <PanelBody>
                  <Select>---------<SelectArrows /></Select>
                </PanelBody>
              </Panel>
              <Panel>
                <PanelHead>Nueva Categoría</PanelHead>
              </Panel>
              <SaveButton>Save</SaveButton>
            </Column>
            <Column $top={75}>
              <Heading $bottom={3}>Ingredients</Heading>
              <Inset $w={555} $h={53} />
              <ScrollArea>
                <Ingredient>
                  <Check />
                  <IngredientName>uva</IngredientName>
                </Ingredient>
                <Track $dir="column">
                  <Stepper $dir="column"><Arrow turn={0} /></Stepper>
                  <ThumbVertical />
                  <Stepper $dir="column" $end><Arrow turn={180} /></Stepper>
                </Track>
                <Track $dir="row">
                  <Stepper $dir="row"><Arrow turn={-90} /></Stepper>
                  <ThumbHorizontal><i /><i /><i /></ThumbHorizontal>
                  <Stepper $dir="row" $end><Arrow turn={90} color="#555" /></Stepper>
                </Track>
              </ScrollArea>
              <FormRow $h={24} $gap={0}>
                <CostLabel $ls={0.15}>Other Costs</CostLabel>
                <Inset $w={116} $h={24} />
              </FormRow>
              <FormRow $h={20} $gap={0}>
                <CostLabel $ls={0.05}>Total Cost</CostLabel>
                <Amount>$0.00</Amount>
              </FormRow>
            </Column>
          </Main>
          <Footer>
            <Status>Under development</Status>
            <Contact>
              PH: 1.310.694.4734 | 8581 Santa Monica Blvd. Suite 464 West Hollywood, CA 90069
              <br />
              © Kooshi Gourmet.
            </Contact>
            <Exit>Exit</Exit>
          </Footer>
        </Browser>
      </Workspace>
      <Pointer><PointerIcon /></Pointer>
    </Desktop>
  );
}
